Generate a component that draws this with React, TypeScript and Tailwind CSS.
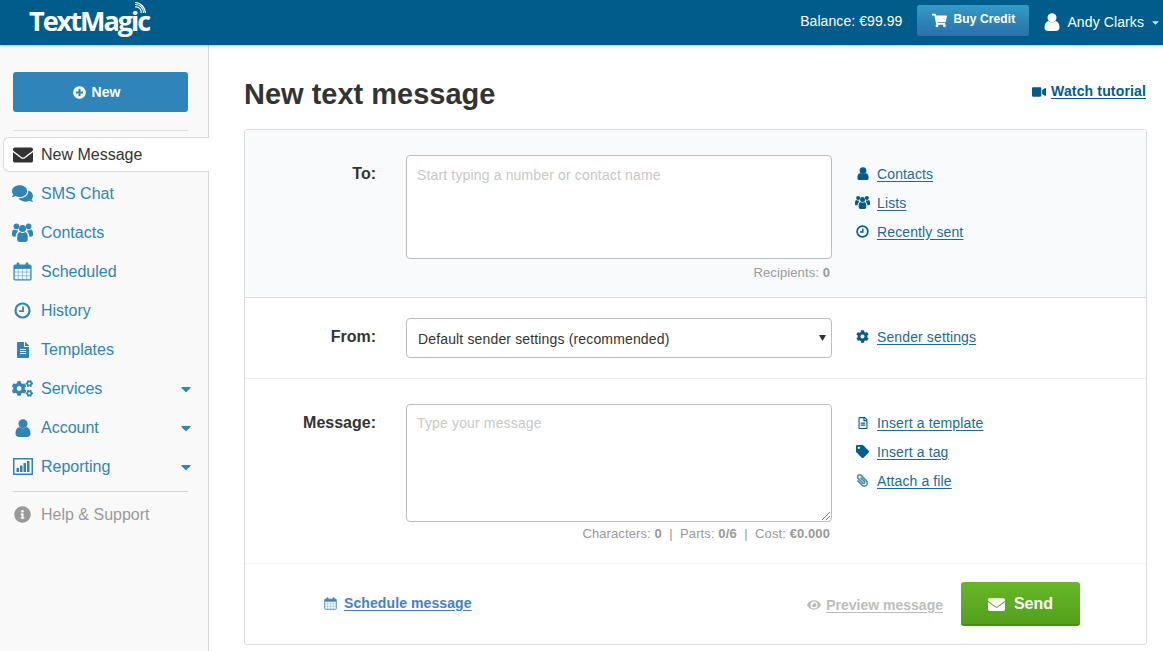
import React from "react";
import {
  FaEnvelope,
  FaComments,
  FaFileAlt,
  FaCogs,
  FaInfoCircle,
  FaPlusCircle,
  FaShoppingCart,
  FaVideo,
  FaCog,
  FaTag,
  FaPaperclip,
  FaEye,
  FaCaretDown,
  FaRegFileAlt,
} from "react-icons/fa";

const ChartIcon = () => (
  <svg width="20" height="17" viewBox="0 0 20 17" fill="currentColor">
    <path d="M0 0h20v17H0V0zm1.5 1.5v14h17v-14h-17z" fillRule="evenodd" />
    <rect x="3.5" y="10" width="2.5" height="4" />
    <rect x="7" y="7.5" width="2.5" height="6.5" />
    <rect x="10.5" y="5" width="2.5" height="9" />
    <rect x="14" y="3" width="2.5" height="11" />
  </svg>
);

const CalendarIcon = ({ size = 19 }: { size?: number }) => (
  <svg width={size} height={size} viewBox="0 0 18 18" fill="none" stroke="currentColor">
    <rect x="1" y="3" width="16" height="14" rx="1" strokeWidth="1.2" />
    <rect x="1" y="3" width="16" height="3.5" fill="currentColor" strokeWidth="0" />
    <path d="M1 9.5h16M1 13h16M5 6v11M9 6v11M13 6v11" strokeWidth="0.7" opacity="0.6" />
    <rect x="3.5" y="0.5" width="2.5" height="4.5" rx="1" fill="currentColor" stroke="none" />
    <rect x="12" y="0.5" width="2.5" height="4.5" rx="1" fill="currentColor" stroke="none" />
  </svg>
);

const ClockIcon = ({ size = 17 }: { size?: number }) => (
  <svg width={size} height={size} viewBox="0 0 17 17" fill="none" stroke="currentColor">
    <circle cx="8.5" cy="8.5" r="7" strokeWidth="2.2" />
    <path d="M9 4.5v4.7H5.2" strokeWidth="1.8" />
  </svg>
);

const UserIcon = ({ size = 16 }: { size?: number }) => (
  <svg width={size} height={(size * 18) / 16} viewBox="0 0 16 18" fill="currentColor">
    <circle cx="8" cy="4.7" r="4.5" />
    <path d="M0.5 14.5c0-3.7 1.4-6 3.9-6.6.9.8 2.2 1.3 3.6 1.3s2.7-.5 3.6-1.3c2.5.6 3.9 2.9 3.9 6.6 0 2-1.4 3.5-3.4 3.5H3.9c-2 0-3.4-1.5-3.4-3.5z" />
  </svg>
);

const UsersIcon = ({ size = 21 }: { size?: number }) => (
  <svg width={size} height={(size * 19) / 21} viewBox="0 0 21 19" fill="currentColor">
    <circle cx="10.5" cy="5.6" r="3.5" />
    <circle cx="4.4" cy="3.4" r="2.8" />
    <circle cx="16.6" cy="3.4" r="2.8" />
    <path d="M5.2 13.8c0-2.6 1-4.4 2.7-4.8.7.6 1.6.9 2.6.9s1.9-.3 2.6-.9c1.7.4 2.7 2.2 2.7 4.8v2.4c0 1.6-1 2.8-2.6 2.8H7.8c-1.6 0-2.6-1.2-2.6-2.8v-2.4z" />
    <path d="M0 10.3c0-2 .7-3.5 1.9-3.9.7.5 1.6.8 2.5.8.5 0 .9-.1 1.3-.2-.1.4-.1.9-.1 1.3 0 .2 0 .5.1.7-1.3.9-2 2.6-2.1 4.7H2c-1.2 0-2-.9-2-2.2v-1.2z" />
    <path d="M21 10.3c0-2-.7-3.5-1.9-3.9-.7.5-1.6.8-2.5.8-.5 0-.9-.1-1.3-.2.1.4.1.9.1 1.3 0 .2 0 .5-.1.7 1.3.9 2 2.6 2.1 4.7H19c1.2 0 2-.9 2-2.2v-1.2z" />
  </svg>
);

const navItems = [
  { label: "SMS Chat", icon: <FaComments size={21} /> },
  { label: "Contacts", icon: <UsersIcon /> },
  { label: "Scheduled", icon: <CalendarIcon /> },
  { label: "History", icon: <ClockIcon /> },
  { label: "Templates", icon: <FaFileAlt size={16} /> },
  { label: "Services", icon: <FaCogs size={21} />, caret: true },
  { label: "Account", icon: <UserIcon />, caret: true },
  { label: "Reporting", icon: <ChartIcon />, caret: true },
];

const SideLink = ({ icon, label }: { icon: React.ReactNode; label: string }) => (
  <div className="flex h-[29px] items-center">
    <span className="flex w-[15px] justify-center text-[#005c8a]">{icon}</span>
    <a href="#" className="ml-[7px] text-[14px] leading-[18px] tracking-[0.12px] text-[#1d6a94] underline underline-offset-2">
      {label}
    </a>
  </div>
);

export default function App() {
  return (
    <div className="flex h-screen flex-col overflow-hidden bg-white font-['Liberation_Sans',Arial,sans-serif] text-[#333]">
      <header className="z-10 flex h-[45px] shrink-0 items-center bg-[#005c8a] pr-[2px] shadow-[0_1px_2px_rgba(0,0,0,0.25)]">
        <div className="relative ml-[29px] -mt-[5px] font-['Open_Sans',sans-serif] text-[27px] font-bold leading-[45px] tracking-[-2px] text-white">
          TextMagic
          <svg className="absolute right-[3px] top-[4px]" width="13" height="13" viewBox="0 0 13 13" fill="none" stroke="white" strokeWidth="1.2">
            <path d="M2 5a5 5 0 0 1 6 6M2 2.5a8 8 0 0 1 8.5 8.5M2 0.5a11 11 0 0 1 10.5 10.5" />
          </svg>
        </div>
        <div className="ml-auto flex items-center">
          <span className="-mt-[2px] text-[14px] tracking-[0.07px] text-white">Balance: €99.99</span>
          <button className="-mt-[5px] ml-[15px] flex h-[31px] w-[112px] items-center justify-center gap-[7px] rounded-[2px] bg-gradient-to-b from-[#339bc7] to-[#2a6fa9] text-[12px] font-bold tracking-[0.1px] text-white">
            <FaShoppingCart size={15} />
            <span className="-mt-[2px]">Buy Credit</span>
          </button>
          <span className="ml-[15px] -mt-[1px] text-white">
            <UserIcon size={16} />
          </span>
          <span className="ml-[7px] text-[14px] tracking-[0.1px] text-white">Andy Clarks</span>
          <FaCaretDown size={11} className="ml-[6px] text-[#cfe0ea]" />
        </div>
      </header>

      <div className="flex min-h-0 flex-1">
        <aside className="w-[209px] shrink-0 border-r border-[#d9d9d9] bg-[#f9f9f9] pt-[27px]">
          <button className="mx-[13px] flex h-[40px] w-[175px] items-center justify-center gap-[6px] rounded-[3px] bg-[#2f84b9] pr-[8px] text-[14px] font-bold text-white">
            <FaPlusCircle size={13} />
            New
          </button>
          <div className="mx-[13px] mt-[18px] w-[175px] border-t border-[#dedede]" />
          <div className="relative mb-[2px] ml-[3px] mt-[6px] flex h-[35px] w-[206px] items-center rounded-l-[6px] border border-r-0 border-[#dcdcdc] bg-white">
            <FaEnvelope size={20} className="ml-[9px] text-[#333]" />
            <span className="ml-[8px] text-[16px] text-[#333]">New Message</span>
          </div>
          <nav className="flex flex-col">
            {navItems.map((item) => (
              <div key={item.label} className="flex h-[39px] items-center text-[#2f84b9]">
                <span className="ml-[12px] flex w-[21px] justify-center">{item.icon}</span>
                <span className="ml-[8px] text-[16px]">{item.label}</span>
                {item.caret && <FaCaretDown size={16} className="ml-auto mr-[14px]" />}
              </div>
            ))}
          </nav>
          <div className="mx-[13px] mt-[5px] w-[175px] border-t border-[#d5d5d5]" />
          <div className="mt-[3px] flex h-[39px] items-center text-[#999]">
            <span className="ml-[12px] flex w-[21px] justify-center">
              <FaInfoCircle size={17} />
            </span>
            <span className="ml-[8px] text-[16px]">Help & Support</span>
          </div>
        </aside>

        <main className="min-w-0 flex-1 pl-[35px] pr-[16px]">
          <div className="flex h-[84px] items-start justify-between">
            <h1 className="mt-[30px] text-[29px] font-bold leading-[38px] text-[#333]">New text message</h1>
            <a href="#" className="mr-[1px] mt-[36px] flex items-center gap-[5px] text-[14px] font-bold tracking-[0.15px] text-[#005c8a]">
              <FaVideo size={14} />
              <span className="underline underline-offset-2">Watch tutorial</span>
            </a>
          </div>

          <div className="rounded-[3px] border border-[#dcdcdc]">
            <section className="flex h-[168px] border-b border-[#dcdcdc] bg-[#f9fafc] pt-[25px]">
              <label className="mt-[9px] w-[131px] text-right text-[16px] font-bold leading-[20px]">To:</label>
              <div className="ml-[30px] w-[426px]">
                <div className="h-[104px] rounded-[4px] border border-[#bdbdbd] bg-white px-[10px] py-[10px] text-[14px] leading-[18px] tracking-[0.15px] text-[#c8c8c8]">
                  Start typing a number or contact name
                </div>
                <div className="mt-[6px] pr-[2px] text-right text-[13px] leading-[16px] tracking-[0.1px] text-[#999]">
                  Recipients: <b>0</b>
                </div>
              </div>
              <div className="ml-[23px] mt-[4px] flex flex-col">
                <SideLink icon={<UserIcon size={12} />} label="Contacts" />
                <SideLink icon={<UsersIcon size={16} />} label="Lists" />
                <SideLink icon={<ClockIcon size={13} />} label="Recently sent" />
              </div>
            </section>

            <section className="flex h-[81px] border-b border-[#efefef] pt-[20px]">
              <label className="mt-[9px] w-[131px] text-right text-[16px] font-bold leading-[20px]">From:</label>
              <div className="relative ml-[30px] flex h-[40px] w-[426px] items-center rounded-[4px] border border-[#bdbdbd] bg-white pl-[11px] pt-[3px] text-[14px] tracking-[0.15px] text-[#333]">
                Default sender settings (recommended)
                <svg className="absolute right-[5px] top-[16px]" width="7" height="6" viewBox="0 0 7 6" fill="#333">
                  <path d="M0 0h7L3.5 6z" />
                </svg>
              </div>
              <div className="ml-[23px] mt-[4px]">
                <SideLink icon={<FaCog size={13} />} label="Sender settings" />
              </div>
            </section>

            <section className="flex h-[185px] border-b border-[#f3f3f3] pt-[25px]">
              <label className="mt-[9px] w-[131px] text-right text-[16px] font-bold leading-[20px]">Message:</label>
              <div className="ml-[30px] w-[426px]">
                <div className="relative h-[118px] rounded-[4px] border border-[#bdbdbd] bg-white px-[10px] py-[9px] text-[14px] leading-[18px] tracking-[0.15px] text-[#c8c8c8]">
                  Type your message
                  <svg className="absolute bottom-[1px] right-[1px]" width="8" height="8" viewBox="0 0 8 8" stroke="#666" strokeWidth="0.8">
                    <path d="M0 8L8 0M4 8L8 4" />
                  </svg>
                </div>
                <div className="mt-[4px] pr-[2px] text-right text-[13px] leading-[16px] tracking-[0.1px] text-[#999]">
                  Characters: <b>0</b>&nbsp; | &nbsp;Parts: <b>0/6</b>&nbsp; | &nbsp;Cost: <b>€0.000</b>
                </div>
              </div>
              <div className="ml-[23px] mt-[4px] flex flex-col">
                <SideLink icon={<FaRegFileAlt size={12} />} label="Insert a template" />
                <SideLink icon={<FaTag size={13} />} label="Insert a tag" />
                <SideLink icon={<FaPaperclip size={13} className="-scale-x-100 opacity-70" />} label="Attach a file" />
              </div>
            </section>

            <section className="flex h-[80px] items-center">
              <a href="#" className="mb-[2px] ml-[79px] flex items-center gap-[7px] text-[14px] font-bold tracking-[0.1px] text-[#3f82c4]">
                <CalendarIcon size={13} />
                <span className="underline underline-offset-2">Schedule message</span>
              </a>
              <a href="#" className="ml-auto mt-[2px] flex items-center gap-[5px] text-[14px] font-bold text-[#bdbdbd]">
                <FaEye size={14} />
                <span className="underline underline-offset-2">Preview message</span>
              </a>
              <button className="ml-[18px] mr-[66px] flex h-[44px] w-[119px] items-center justify-center gap-[9px] rounded-[3px] border-b-2 border-[#4c8a17] bg-gradient-to-b from-[#66b826] to-[#54a01c] pt-[2px] text-[16px] font-bold text-white">
                <FaEnvelope size={17} />
                Send
              </button>
            </section>
          </div>
        </main>
      </div>
    </div>
  );
}
